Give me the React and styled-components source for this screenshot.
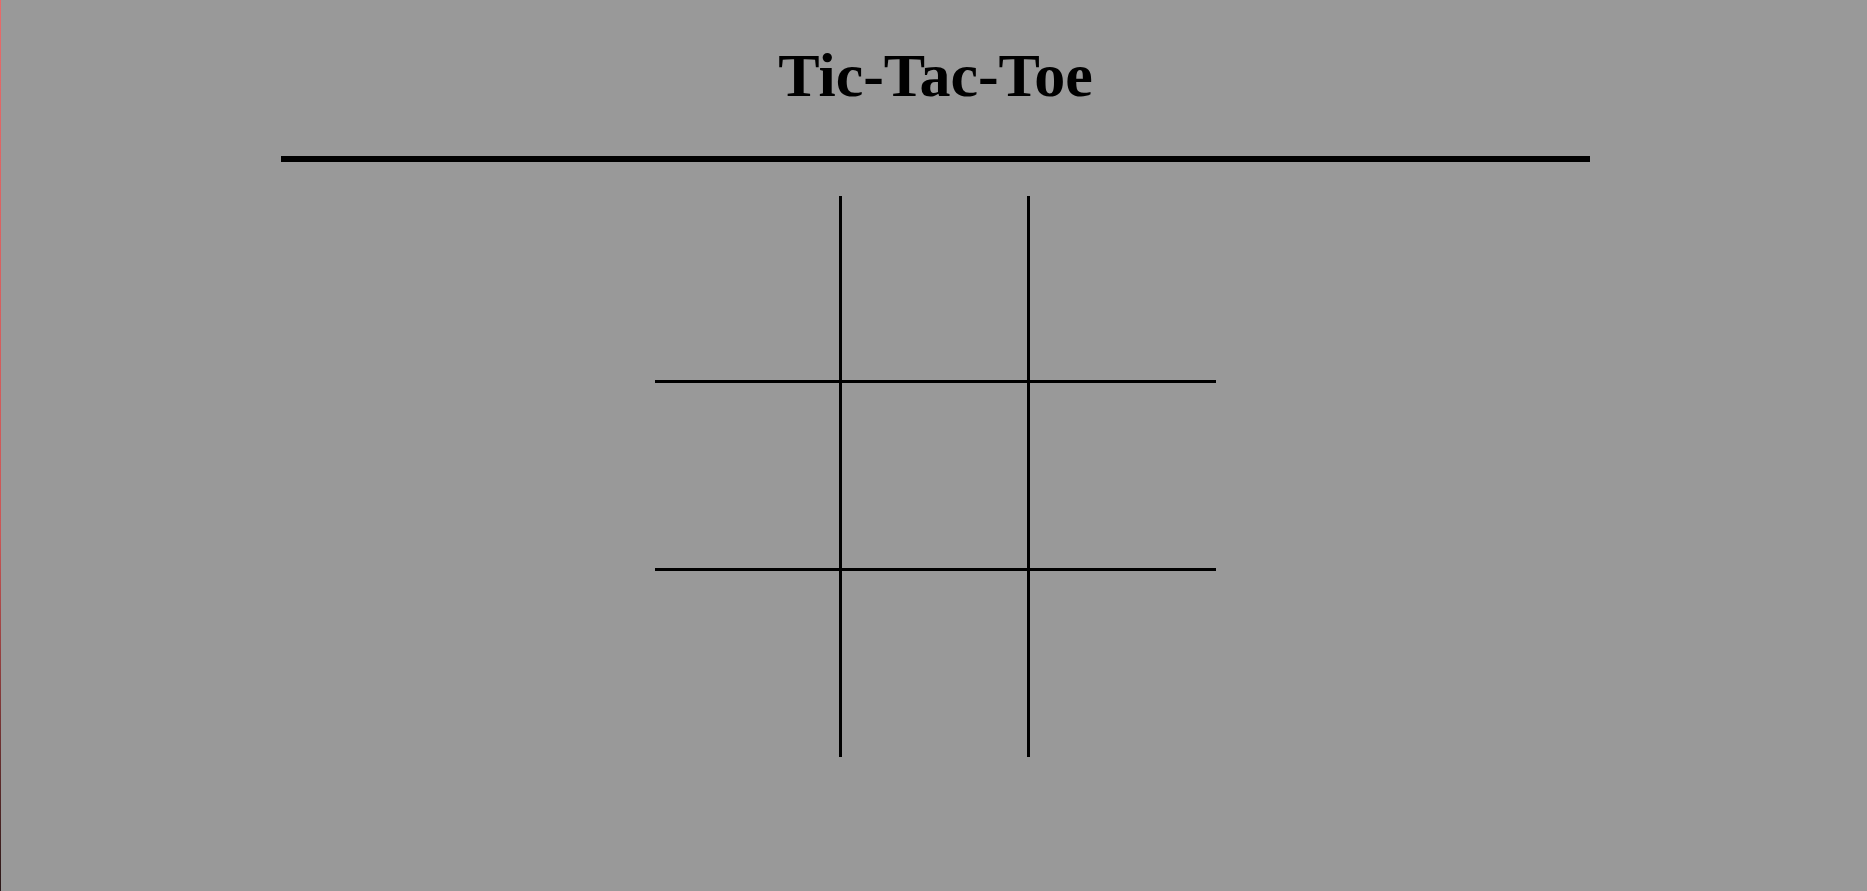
import styled, { createGlobalStyle } from 'styled-components';

const GlobalStyle = createGlobalStyle`
    html {
        background: #999999;
        border-left: 1px solid;
        border-image: linear-gradient(#e86a6a, #c55 60%, #2a1818) 1;
        min-height: 100vh;
        box-sizing: border-box;
    }
    body {
        margin: 0;
        font-family: "Liberation Serif", "Times New Roman", serif;
    }
`;

const Page = styled.div`
    display: flex;
    flex-direction: column;
    align-items: center;
    padding-left: 3px;
`;

const Title = styled.h1`
    margin: 40px 0 0;
    font-size: 62px;
    line-height: 71px;
    font-weight: bold;
    color: #000;
`;

const Rule = styled.div`
    width: 1309px;
    height: 6px;
    background: #000;
    margin-top: 45px;
`;

const Board = styled.div`
    display: grid;
    grid-template-columns: 187px 188px 186px;
    grid-template-rows: 187px 188px 186px;
    margin-top: 34px;
`;

const Square = styled.div`
    box-sizing: border-box;
    border-right: ${props => props.$right ? '3px solid #000' : 'none'};
    border-bottom: ${props => props.$bottom ? '3px solid #000' : 'none'};
    cursor: pointer;
`;

function App() {
    const squares = Array(9).fill(null);

    return (
        <Page>
            <GlobalStyle />
            <Title>Tic-Tac-Toe</Title>
            <Rule />
            <Board>
                {squares.map((value, i) => (
                    <Square
                        key={i}
                        $right={i % 3 !== 2}
                        $bottom={i < 6}
                    >{value}</Square>
                ))}
            </Board>
        </Page>
    );
}

export default App;
